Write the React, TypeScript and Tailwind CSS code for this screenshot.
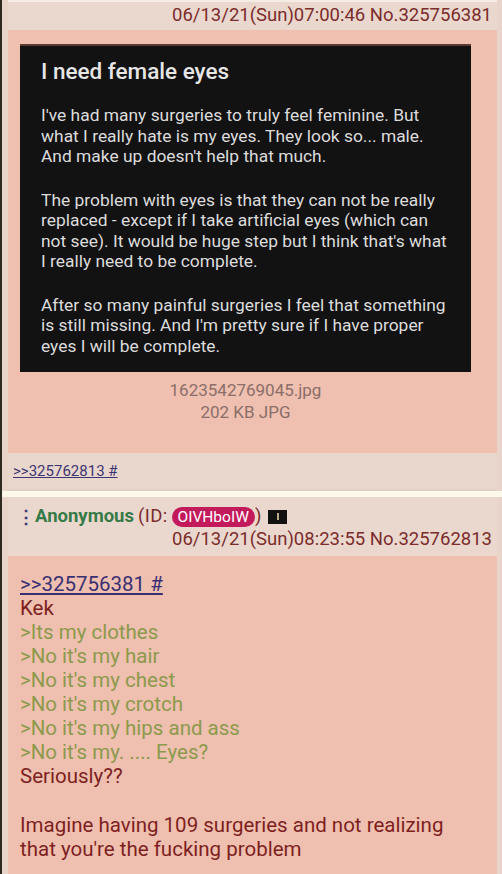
import React from "react";

const green = [
  ">Its my clothes",
  ">No it's my hair",
  ">No it's my chest",
  ">No it's my crotch",
  ">No it's my hips and ass",
  ">No it's my. .... Eyes?",
];

const Op = () => (
  <div className="border-l-[6px] border-r-[5px] border-[#e8d4ca]">
    <div className="h-[30px] bg-[#ead8ce] border-t-2 border-[#f6ece6] flex items-center justify-end pr-[5px] text-[18.5px] text-[#7b2c2c]">
      06/13/21(Sun)07:00:46 No.325756381
    </div>
    <div className="bg-[#efbfaf] pt-[14px] pb-[30px] pl-[12px] pr-[26px]">
      <div className="bg-[#121212] border-t-2 border-[#5a3a33] h-[328px] pl-[21px] pr-2 pt-[10px] text-[#dcdcdc]">
        <div className="text-[22.5px] font-medium leading-[30px] mb-[19px] text-[#e6e6e6]">
          I need female eyes
        </div>
        <div className="text-[17.4px] leading-[20.5px] flex flex-col gap-[23px]">
          <p>
            I've had many surgeries to truly feel feminine. But
            <br />
            what I really hate is my eyes. They look so... male.
            <br />
            And make up doesn't help that much.
          </p>
          <p>
            The problem with eyes is that they can not be really
            <br />
            replaced - except if I take artificial eyes (which can
            <br />
            not see). It would be huge step but I think that's what
            <br />I really need to be complete.
          </p>
          <p>
            After so many painful surgeries I feel that something
            <br />
            is still missing. And I'm pretty sure if I have proper
            <br />
            eyes I will be complete.
          </p>
        </div>
      </div>
      <div className="text-center text-[17px] leading-[22px] text-[#8b6e69] mt-[7px]">
        <div>1623542769045.jpg</div>
        <div>202 KB JPG</div>
      </div>
    </div>
    <div className="bg-[#e9d7ce] h-[38px] flex items-center pl-[5px] border-b-2 border-[#e2cfc4]">
      <span className="text-[15px] text-[#3c3571] underline">&gt;&gt;325762813 #</span>
    </div>
  </div>
);

const Reply = () => (
  <div className="border-l-[6px] border-r-[5px] border-[#e8d4ca]">
    <div className="bg-[#ead8ce] h-[59px] pt-[8px] pr-[5px] text-[18.5px] leading-[23px]">
      <div className="flex items-center pl-[9px]">
        <span className="text-[#3c3a7a] font-bold text-[18px] w-[18px]">⋮</span>
        <span className="text-[#367a48] font-bold">Anonymous</span>
        <span className="text-[#7b2c2c] ml-[4px] tracking-[0.4px]">(ID:</span>
        <span className="ml-[4px] bg-[#c31a5c] text-white text-[15.5px] leading-[20px] px-[6px] rounded-full">
          OIVHboIW
        </span>
        <span className="text-[#7b2c2c]">)</span>
        <span className="ml-[7px] w-[19px] h-[14px] bg-[#111] flex items-center justify-center">
          <span className="w-[2px] h-[7px] bg-[#b8a98a]" />
        </span>
      </div>
      <div className="text-right text-[#7b2c2c]">06/13/21(Sun)08:23:55 No.325762813</div>
    </div>
    <div className="bg-[#efbfaf] pl-[12px] pt-[16px] pb-[40px] text-[20.5px] leading-[24px] text-[#7e1f1f]">
      <div className="text-[#3a2f72] underline">&gt;&gt;325756381 #</div>
      <div>Kek</div>
      {green.map((g) => (
        <div key={g} className="text-[#8c9a4c]">
          {g}
        </div>
      ))}
      <div>Seriously??</div>
      <div className="h-[25px]" />
      <div>
        Imagine having 109 surgeries and not realizing
        <br />
        that you're the fucking problem
      </div>
    </div>
  </div>
);

export default function App() {
  return (
    <div
      className="w-[502px] h-[874px] overflow-hidden bg-[#fcf8ea] border-l-2 border-[#2d2a20]"
      style={{ fontFamily: "Roboto, 'Noto Sans', sans-serif" }}
    >
      <Op />
      <div className="h-[6px]" />
      <Reply />
    </div>
  );
}
